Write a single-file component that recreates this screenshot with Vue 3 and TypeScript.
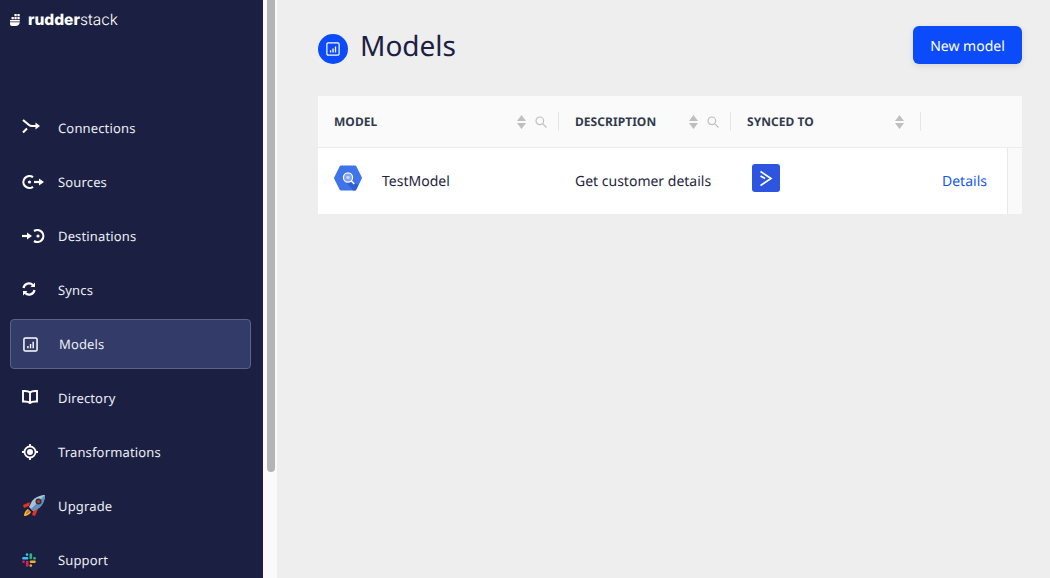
<script setup lang="ts">
const navItems = [
  { label: "Connections", icon: "connections" },
  { label: "Sources", icon: "sources" },
  { label: "Destinations", icon: "destinations" },
  { label: "Syncs", icon: "syncs" },
  { label: "Models", icon: "models", active: true },
  { label: "Directory", icon: "directory" },
  { label: "Transformations", icon: "transformations" },
  { label: "Upgrade", icon: "upgrade" },
  { label: "Support", icon: "support" },
];
</script>

<template>
  <div class="page">
    <aside class="sidebar">
      <div class="logo">
        <svg width="10" height="12" viewBox="0 0 10 12">
          <path fill="#fff" d="M4.400 0h2.300v2.200H4.400zM7.400 0h2.300v2.200H7.400zM1.500 3h2.300v2.300H1.500zM4.400 3h2.300v2.300H4.400zM7.400 3h2.300v2.300H7.400z" />
          <path fill="#fff" d="M0 6h9.800v1.400H0zM0 8.200h9.800C9.600 10.500 8 12 5.500 12H2.200C.8 12 0 11 0 9.700z" />
        </svg>
        <span class="logo-text"><b>rudder</b>stack</span>
      </div>
      <nav class="nav">
        <a v-for="item in navItems" :key="item.label" class="nav-item" :class="{ active: item.active }">
          <span class="nav-icon">
            <svg v-if="item.icon === 'connections'" width="24" height="20" viewBox="0 1.500 24 20" fill="none" stroke="#fff" stroke-width="2.200">
              <path d="M1 3.500l6 5c1 .8 2 1 3 1h6" />
              <path d="M1 16l4-4" />
              <path fill="#fff" stroke="none" d="M13.500 6l4.500 3.500-4.500 3.500z" />
            </svg>
            <svg v-else-if="item.icon === 'sources'" width="24" height="20" viewBox="0 0 24 20" fill="none" stroke="#fff" stroke-width="2.200">
              <path d="M11 5.200a6 6 0 1 0 0 9.600" />
              <circle cx="7.500" cy="10" r="1.600" fill="#fff" stroke="none" />
              <path d="M12 10h6" />
              <path fill="#fff" stroke="none" d="M17 6.500l5 3.500-5 3.500z" />
            </svg>
            <svg v-else-if="item.icon === 'destinations'" width="24" height="20" viewBox="0 0 24 20" fill="none" stroke="#fff" stroke-width="2.200">
              <path d="M0 10h6" />
              <path fill="#fff" stroke="none" d="M5 6.500l5 3.500-5 3.500z" />
              <path d="M12 5a6 6 0 1 1 0 10" />
              <circle cx="16" cy="10" r="1.600" fill="#fff" stroke="none" />
            </svg>
            <svg v-else-if="item.icon === 'syncs'" width="14" height="14" class="up-1" viewBox="0 0 14 14" fill="none" stroke="#fff" stroke-width="2.200">
              <path d="M1.500 6A5.500 5.500 0 0 1 11 3.200" />
              <path d="M12.500 8A5.500 5.500 0 0 1 3 10.800" />
              <path fill="#fff" stroke="none" d="M13 .5V5H8.500z" />
              <path fill="#fff" stroke="none" d="M1 13.500V9h4.500z" />
            </svg>
            <svg v-else-if="item.icon === 'models'" width="15" height="15" viewBox="0 0 16 16" fill="none">
              <rect x="1" y="1" width="14" height="14" rx="1.500" stroke="#fff" stroke-width="1.600" />
              <path fill="#fff" d="M4.500 9.500H6V12H4.500zM7.300 7.500h1.500V12H7.300zM10.100 5h1.500v7h-1.500z" />
            </svg>
            <svg v-else-if="item.icon === 'directory'" width="16" height="14" class="up-1" viewBox="0 0 16 14" fill="none" stroke="#fff" stroke-width="1.900">
              <path d="M8 2.500C6.500 1 4 .800 1 1v10.500c3-.200 5.500 0 7 1.500 1.500-1.500 4-1.700 7-1.500V1c-3-.200-5.500 0-7 1.500zM8 2.500V13" />
            </svg>
            <svg v-else-if="item.icon === 'transformations'" width="16" height="16" viewBox="0 0 16 16" fill="none" stroke="#fff" stroke-width="1.800">
              <circle cx="8" cy="8" r="5.500" />
              <circle cx="8" cy="8" r="3" fill="#fff" stroke="none" />
              <path d="M8 0v2.500M8 13.500V16M0 8h2.500M13.500 8H16" />
            </svg>
            <svg v-else-if="item.icon === 'upgrade'" class="rocket" width="24" height="24" viewBox="0 0 24 24">
              <path fill="#e8321f" d="M8 8L1 11l1 3 5-2zM12 15l-2 6 3 1 3-7z" />
              <path fill="#f7c531" d="M6 15c-2 1-4 4-4 7 3 0 6-2 7-4z" />
              <path fill="#e8692a" d="M6.500 16c-1.500 1-2.500 2.500-3 4.500 2-.500 3.500-1.500 4.500-3z" />
              <path fill="#a9c3d8" d="M23 1c-5 0-10 2.500-13 6l-3 6 4 4 6-3c3.500-3 6-8 6-13z" />
              <path fill="#5d8fc0" d="M23 1c0 5-2.500 10-6 13l-6 3-2-2z" />
              <circle cx="16.500" cy="7.500" r="3" fill="#2d3038" />
              <circle cx="16.500" cy="7.500" r="1.600" fill="#c8302a" />
            </svg>
            <svg v-else width="14" height="14" viewBox="0 0 14 14" fill="none" stroke-width="2.600" stroke-linecap="round">
              <path stroke="#36c5f0" d="M1.500 5.300h3.500" />
              <path stroke="#36c5f0" d="M5 1.500v.1" />
              <path stroke="#2eb67d" d="M8.800 1.500V5" />
              <path stroke="#2eb67d" d="M12.500 5.300h.1" />
              <path stroke="#ecb22e" d="M9 8.800h3.500" />
              <path stroke="#ecb22e" d="M8.800 12.500v.1" />
              <path stroke="#e01e5a" d="M5.200 9v3.500" />
              <path stroke="#e01e5a" d="M1.500 8.800h.1" />
            </svg>
          </span>
          <span>{{ item.label }}</span>
        </a>
      </nav>
    </aside>

    <div class="scrollbar"><div class="thumb"></div></div>

    <main class="main">
      <header class="header">
        <div class="title">
          <span class="title-icon">
            <svg width="14" height="14" viewBox="0 0 16 16" fill="none">
              <rect x="1" y="1" width="14" height="14" rx="1.500" stroke="#fff" stroke-width="1.400" />
              <path fill="#fff" d="M4.500 9.500H6V12H4.500zM7.300 7.500h1.500V12H7.300zM10.100 5h1.500v7h-1.500z" />
            </svg>
          </span>
          <h1>Models</h1>
        </div>
        <button class="new-btn">New model</button>
      </header>

      <section class="table">
        <div class="head-row">
          <div class="th col-model">
            <span>MODEL</span>
            <span class="th-tools">
              <svg width="9" height="14" viewBox="0 0 9 14"><path fill="#bfbfbf" d="M4.500 0L9 6H0zM0 8h9l-4.500 6z" /></svg>
              <svg class="search" width="12" height="12" viewBox="0 0 12 12" fill="none" stroke="#bfbfbf" stroke-width="1.200"><circle cx="4.800" cy="4.800" r="3.800" /><path d="M7.600 7.600L11.500 11.500" /></svg>
            </span>
          </div>
          <div class="th col-desc">
            <span>DESCRIPTION</span>
            <span class="th-tools">
              <svg width="9" height="14" viewBox="0 0 9 14"><path fill="#bfbfbf" d="M4.500 0L9 6H0zM0 8h9l-4.500 6z" /></svg>
              <svg class="search" width="12" height="12" viewBox="0 0 12 12" fill="none" stroke="#bfbfbf" stroke-width="1.200"><circle cx="4.800" cy="4.800" r="3.800" /><path d="M7.600 7.600L11.500 11.500" /></svg>
            </span>
          </div>
          <div class="th col-sync">
            <span>SYNCED TO</span>
            <span class="th-tools sync-tools">
              <svg width="9" height="14" viewBox="0 0 9 14"><path fill="#bfbfbf" d="M4.500 0L9 6H0zM0 8h9l-4.500 6z" /></svg>
            </span>
          </div>
        </div>
        <div class="body-row">
          <div class="td col-model">
            <svg class="bq" width="28" height="26" viewBox="0 0 28 26">
              <path fill="#3f73ea" d="M7 .5h14c.6 0 1 .3 1.300.8l5.400 10.700c.3.600.3 1.200 0 1.800l-5.400 10.900c-.3.500-.7.800-1.300.8H7c-.6 0-1-.3-1.300-.8L.3 14c-.3-.6-.3-1.200 0-1.800L5.700 1.300C6 .8 6.400.5 7 .5z" />
              <path fill="#2f5fd0" d="M17 16l7.400 4-2.900 5.500H19L13 18z" />
              <circle cx="14" cy="12.500" r="4.600" fill="#7fa3f2" stroke="#fff" stroke-width="1.200" />
              <path stroke="#fff" stroke-width="1.600" d="M17.300 16l3 3" />
              <circle cx="14" cy="12.500" r="1.800" fill="#c5d5f8" />
            </svg>
            <span class="model-name">TestModel</span>
          </div>
          <div class="td col-desc">Get customer details</div>
          <div class="td col-sync">
            <span class="sync-badge">
              <svg width="14" height="17" viewBox="0 0 14 17" fill="none" stroke="#fff" stroke-width="1.700">
                <path d="M1.500 1.500L12 8.500 1.500 15.500" />
                <path d="M1.500 6l4.500 2.500" />
              </svg>
            </span>
          </div>
          <div class="td col-action"><a class="details">Details</a></div>
          <div class="strip"></div>
        </div>
      </section>
    </main>
  </div>
</template>

<style>
body {
  background: #eeeeee;
}
</style>

<style scoped>
.page {
  display: flex;
  height: 578px;
  overflow: hidden;
  font-family: "Noto Sans", "Open Sans", sans-serif;
  text-rendering: geometricPrecision;
  background: #eeeeee;
}
.page * {
  box-sizing: border-box;
}

.sidebar {
  flex: 0 0 263px;
  background: #1b2042;
  color: #eceef4;
}

.logo {
  display: flex;
  align-items: center;
  gap: 8px;
  height: 40px;
  padding-left: 10px;
  margin-bottom: 63px;
}
.logo-text {
  font-family: "Inter", sans-serif;
  font-size: 15.500px;
  font-weight: 300;
  line-height: 1;
  color: #fff;
}
.logo-text b {
  font-weight: 800;
}

.nav {
  display: flex;
  flex-direction: column;
  gap: 4px;
  padding: 0 12px 0 10px;
}
.nav-item {
  display: flex;
  align-items: center;
  height: 50px;
  padding-left: 12px;
  font-size: 13px;
  letter-spacing: 0.150px;
}
.nav-item.active {
  background: #333b68;
  border: 1px solid #5c6388;
  border-radius: 4px;
}
.nav-icon {
  flex: 0 0 36px;
  display: flex;
  align-items: center;
  height: 20px;
}
.rocket {
  flex: none;
}
.up-1 {
  margin-top: -2px;
}

.scrollbar {
  flex: 0 0 14px;
  background: #fafafa;
  padding: 0 2px 0 4px;
}
.thumb {
  height: 472px;
  background: #b4b4b4;
  border-radius: 0 0 4px 4px;
}

.main {
  flex: 1;
  padding: 26px 28px 0 41px;
}
.header {
  display: flex;
  justify-content: space-between;
  align-items: flex-start;
  margin-bottom: 32px;
}
.title {
  display: flex;
  align-items: center;
  gap: 12px;
  height: 38px;
}
.title-icon {
  display: flex;
  align-items: center;
  justify-content: center;
  width: 30px;
  height: 30px;
  margin-top: 8px;
  border-radius: 50%;
  background: #0b4bfa;
}
h1 {
  margin: 2px 0 0;
  font-size: 28px;
  font-weight: 400;
  line-height: 38px;
  color: #1b2042;
}
.new-btn {
  width: 109px;
  height: 38px;
  padding: 2px 0 0;
  border: 0;
  border-radius: 6px;
  background: #0b4bfa;
  color: #fff;
  font: 400 14px "Noto Sans", sans-serif;
  text-rendering: geometricPrecision;
  box-shadow: 0 2px 6px rgba(0, 0, 0, 0.1);
}

.table {
  width: 704px;
}
.head-row,
.body-row {
  display: grid;
  grid-template-columns: 241px 172px 190px 86px 15px;
}
.head-row {
  height: 52px;
  background: #fafafa;
  border-bottom: 1px solid #ececec;
}
.th {
  position: relative;
  display: flex;
  align-items: center;
  justify-content: space-between;
  padding: 0 12px 0 16px;
  font-size: 12px;
  font-weight: 700;
  letter-spacing: 0.050px;
  color: #333a4d;
}
.th::after {
  content: "";
  position: absolute;
  right: 0;
  top: 16px;
  width: 1px;
  height: 19px;
  background: #e6e6e6;
}
.th-tools {
  display: flex;
  align-items: center;
  gap: 9px;
}
.sync-tools {
  margin-right: 5px;
}
.body-row {
  height: 66px;
  background: #fff;
  color: #1f2540;
  font-size: 14px;
}
.td {
  display: flex;
  align-items: center;
  padding-left: 16px;
  height: 66px;
}
.bq {
  flex: none;
  margin-top: -6px;
}
.model-name {
  margin-left: 20px;
}
.sync-badge {
  display: flex;
  align-items: center;
  justify-content: center;
  width: 28px;
  height: 28px;
  margin: -6px 0 0 5px;
  border-radius: 3px;
  background: #2d55e0;
}
.col-action.td {
  padding-left: 21px;
}
.details {
  color: #1558f0;
}
.strip {
  background: #fafafa;
  border-left: 1px solid #e8e8e8;
}
</style>
